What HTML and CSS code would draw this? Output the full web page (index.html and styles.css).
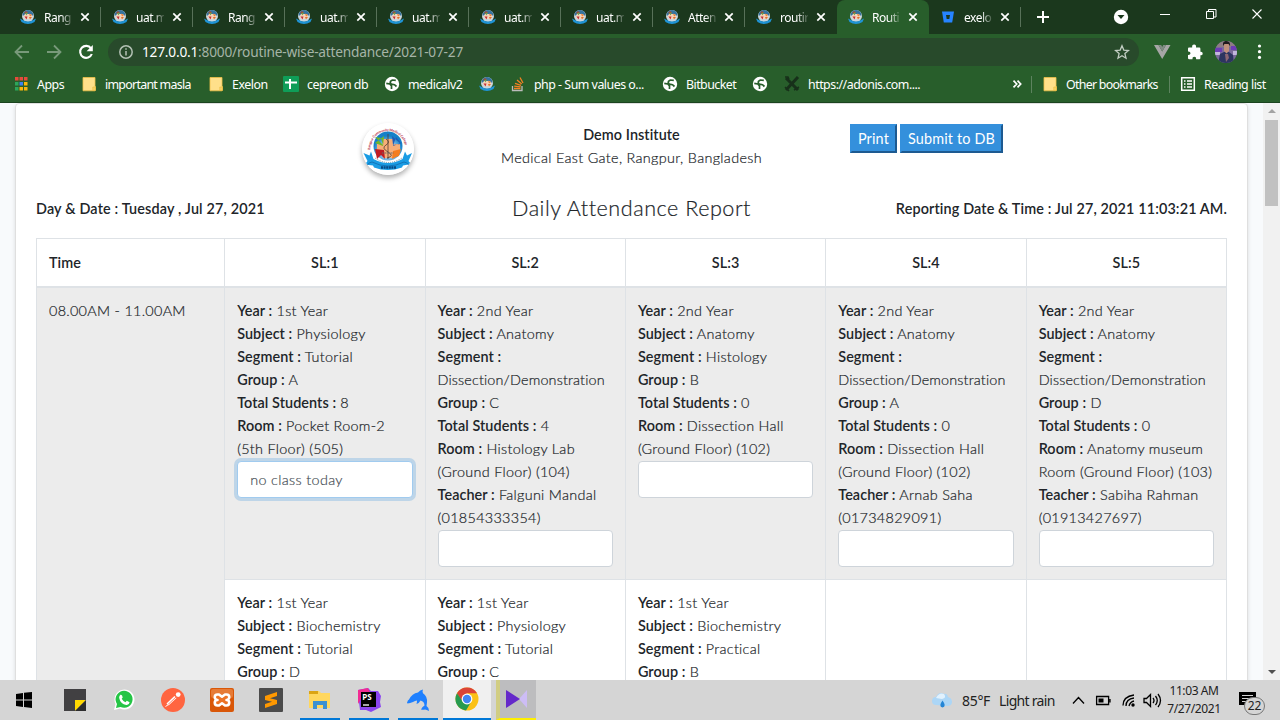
FILE: index.html
```html
<!DOCTYPE html>
<html lang="en">
<head>
<meta charset="utf-8">
<title>Routine</title>
<link rel="stylesheet" href="styles.css">
</head>
<body>
<svg class="defs" width="0" height="0">
  <symbol id="crest" viewBox="0 0 16 16">
    <circle cx="8" cy="7" r="6" fill="#c9d6df"/><path d="M2.500 6.500a5.500 5.500 0 0 1 11 0z" fill="#35739f"/><path d="M4 4l2-2 2 1.500L6 5z" fill="#a04a3a"/>
    <path d="M5 5h6l1.500 2.500L11 10H5.500L3.500 7.500z" fill="#f6d3b8"/><path d="M5 4l3-.5-1.500 3z" fill="#72a14c"/><path d="M9 4.500l3 1.500-2 1.500z" fill="#e8823a"/><path d="M4.500 7.500l3 0-1 3z" fill="#c2303a"/><path d="M9 8l3 0-2 2.500z" fill="#e0722f"/>
    <path d="M0 9.500l3 1.500q5 3 10 0l3-1.500-1.500 3.500q-6.500 4-13 0z" fill="#1f94d6"/>
  </symbol>
  <symbol id="close" viewBox="0 0 10 10"><path d="M1.300 1.300l7.400 7.400M8.700 1.300L1.300 8.700" stroke="#fff" stroke-width="1.700"/></symbol>
  <symbol id="folder" viewBox="0 0 16 16"><path d="M2 1.500h12v9h.500V14q0 .800-.800.800H2z" fill="#ffe08a" stroke="#f0c24a" stroke-width=".8"/><path d="M11.800 14.500v-3.500h2.500v3.500z" fill="#f7d468" stroke="#e8b93e" stroke-width=".6"/></symbol>
  <symbol id="globe" viewBox="0 0 16 16"><circle cx="8" cy="8" r="7.200" fill="#fff"/><path d="M2.300 7.300l3.500.700 1.700 1.800v3.200M12.500 10.500l-2-1.800-3-.5Q5.700 7 6.500 5.300L8.300 4l3.500.3" fill="none" stroke="#285e2b" stroke-width="1.700"/></symbol>
</svg>

<header class="browser">
  <div class="tabstrip">
    <div class="tab"><svg class="fav"><use href="#crest"/></svg><span>Rang</span><svg class="x"><use href="#close"/></svg></div>
    <div class="tab"><svg class="fav"><use href="#crest"/></svg><span>uat.m</span><svg class="x"><use href="#close"/></svg></div>
    <div class="tab"><svg class="fav"><use href="#crest"/></svg><span>Rang</span><svg class="x"><use href="#close"/></svg></div>
    <div class="tab"><svg class="fav"><use href="#crest"/></svg><span>uat.m</span><svg class="x"><use href="#close"/></svg></div>
    <div class="tab"><svg class="fav"><use href="#crest"/></svg><span>uat.m</span><svg class="x"><use href="#close"/></svg></div>
    <div class="tab"><svg class="fav"><use href="#crest"/></svg><span>uat.m</span><svg class="x"><use href="#close"/></svg></div>
    <div class="tab"><svg class="fav"><use href="#crest"/></svg><span>uat.m</span><svg class="x"><use href="#close"/></svg></div>
    <div class="tab"><svg class="fav"><use href="#crest"/></svg><span>Atten</span><svg class="x"><use href="#close"/></svg></div>
    <div class="tab before-active"><svg class="fav"><use href="#crest"/></svg><span>routir</span><svg class="x"><use href="#close"/></svg></div>
    <div class="tab active"><svg class="fav"><use href="#crest"/></svg><span>Routi</span><svg class="x"><use href="#close"/></svg></div>
    <div class="tab"><svg class="fav" viewBox="0 0 16 16"><path d="M2 2.500h12l-1.800 11H3.800z" fill="#2684ff"/><path d="M6 6h4l-.700 4H6.700z" fill="#1b381d"/></svg><span>exelo</span><svg class="x"><use href="#close"/></svg></div>
    <svg class="plus" viewBox="0 0 12 12"><path d="M6 0v12M0 6h12" stroke="#fff" stroke-width="2"/></svg>
    <svg class="winctl" width="160" height="34" viewBox="0 0 160 34"><circle cx="11" cy="17" r="7.200" fill="#fff"/><path d="M7.500 15h7l-3.500 4z" fill="#1b381d"/><path d="M50 14.500h10" stroke="#fff"/><path d="M96.500 11.500h7v7h-7zM98.500 11v-1.500h7.500v7.500h-2" fill="none" stroke="#fff"/><path d="M142.500 9.500l9 9M151.500 9.500l-9 9" stroke="#fff" stroke-width="1.100"/></svg>
  </div>

  <div class="toolbar">
    <svg class="nav" viewBox="0 0 108 36"><g fill="none" stroke-width="1.800"><path d="M29 18H16.500M22 11.500L15.500 18l6.500 6.500M47 18h12.500M54 11.500l6.500 6.500-6.500 6.500" stroke="#78997a"/><path d="M91 14.300A6 6 0 1 0 91.800 20" stroke="#fff" stroke-width="2.100"/></g><path d="M92.800 11v6.200h-6.200z" fill="#fff"/></svg>
    <div class="omnibox">
      <svg class="info" viewBox="0 0 16 16"><circle cx="8" cy="8" r="6.200" fill="none" stroke="#b4c1b5" stroke-width="1.500"/><path d="M8 7v4.500M8 4.300v1.500" stroke="#b4c1b5" stroke-width="1.500"/></svg>
      <span class="url"><b>127.0.0.1</b>:8000/routine-wise-attendance/2021-07-27</span>
      <svg class="star" viewBox="0 0 16 16"><path d="M8 1.800l1.800 4.300 4.700.4-3.600 3.100 1.100 4.600-4-2.500-4 2.500 1.100-4.600L1.500 6.500l4.700-.4z" fill="none" stroke="#c2cdc3" stroke-width="1.300"/></svg>
    </div>
    <svg class="ext" width="141" height="36" viewBox="0 0 141 36">
      <path d="M14 11h4.500l3.700 6.500 3.800-6.500h4.500L22.200 25z" fill="#a6a6a6"/><path d="M18.500 11h2.700l1 2 1-2H26l-3.800 6.500z" fill="#808b84"/>
      <path d="M49 13.500h3.200q-.5-3 1.900-3t1.900 3h3.200q1.200 0 1.200 1.200v3q2.300-.3 2.300 1.800t-2.300 1.800v2.700q0 1.200-1.200 1.200h-3q.2-2.400-1.900-2.400t-1.900 2.400H49.200q-1.200 0-1.200-1.200v-3q2.500.2 2.500-1.800t-2.500-1.800v-2.700q0-1.200 1-1.200z" fill="#fff"/>
      <clipPath id="av"><circle cx="86" cy="18" r="11"/></clipPath>
      <g clip-path="url(#av)"><path d="M75 7h22v22H75z" fill="#7a6a9a"/><path d="M75 7h22v6H75z" fill="#8d7c84"/><path d="M75 14h7v4h-7zM91 12h7v4h-7z" fill="#6d3bb5"/><path d="M75 18h5v3h-5zM93 17h4v4h-4z" fill="#c2b6dd"/><path d="M78 30l2-10 4-2h5l4 3 1 9z" fill="#2c3560"/><path d="M84 10h5v7l-2.500 2.500L84 17z" fill="#c0907c"/><path d="M83 12V9q1-2.500 4-2 3.500.5 3 5l-1.500-2h-4z" fill="#20191f"/><path d="M85 20h3l1 4-3 4z" fill="#8b6672"/></g>
      <g fill="#fff"><circle cx="119.500" cy="12" r="1.600"/><circle cx="119.500" cy="17.700" r="1.600"/><circle cx="119.500" cy="23.400" r="1.600"/></g>
    </svg>
  </div>

  <nav class="bookmarks">
    <a><svg viewBox="0 0 16 16"><path d="M2 1h3.500v3.500H2zM6.500 1H10v3.500H6.500zM11 1h3.500v3.500H11z" fill="#e64b3c"/><path d="M2 6h3.500v3.500H2zM2 11h3.500v3.500H2z" fill="#2da65a"/><path d="M6.500 6H10v3.500H6.500z" fill="#3b82f0"/><path d="M11 6h3.500v3.500H11zM6.500 11H10v3.500H6.500zM11 11h3.500v3.500H11z" fill="#f7b60d"/></svg><span>Apps</span></a>
    <a class="tight"><svg><use href="#folder"/></svg><span>important masla</span></a>
    <a><svg><use href="#folder"/></svg><span>Exelon</span></a>
    <a><svg viewBox="0 0 16 16"><rect width="16" height="16" rx="1" fill="#0f9d58"/><path d="M7 3v10M2 6.500h12" stroke="#fff" stroke-width="2"/></svg><span>cepreon db</span></a>
    <a><svg><use href="#globe"/></svg><span>medicalv2</span></a>
    <a><svg><use href="#crest"/></svg></a>
    <a><svg viewBox="0 0 16 16"><path d="M2.500 10v4.500h9.500V10" fill="none" stroke="#bcbcbb" stroke-width="1.300"/><path d="M4 12.500h6.500M4.200 10.200l6.400.7M5 7.300l6 2M7 4l4.700 4M10 1.500l3 5.500" stroke="#f48024" stroke-width="1.300"/></svg><span>php - Sum values o...</span></a>
    <a><svg><use href="#globe"/></svg><span class="wide">Bitbucket</span></a>
    <a><svg><use href="#globe"/></svg></a>
    <a><svg viewBox="0 0 16 16"><path d="M2 2l12 12M14 1L2 14" stroke="#17301a" stroke-width="3"/><path d="M1 1l3 0 1 2M1 11l4 4M10 14l5-3" stroke="#17301a" stroke-width="1.500" fill="none"/></svg><span>https://adonis.com....</span></a>
    <a class="more"><svg viewBox="0 0 16 16"><path d="M4.500 4.700L7.700 8l-3.200 3.300M8.500 4.700L11.700 8l-3.200 3.300" fill="none" stroke="#fff" stroke-width="1.700"/></svg></a>
    <a class="ruled tight"><svg><use href="#folder"/></svg><span>Other bookmarks</span></a>
    <a class="ruled"><svg viewBox="0 0 16 16"><path d="M1.700 1.700h12.600v12.600H1.700z" fill="none" stroke="#fff" stroke-width="1.500"/><path d="M4 5h1.500M7 5h5M4 8h1.500M7 8h5M4 11h1.500M7 11h5" stroke="#fff" stroke-width="1.600"/></svg><span>Reading list</span></a>
  </nav>
</header>

<div class="viewport">
  <main class="card">
    <div class="top">
      <div class="logo-col">
        <svg class="logo" viewBox="0 0 52 52"><circle cx="26" cy="26" r="26" fill="#fff"/>
          <defs><path id="arc" d="M8.200 27a17.800 19 0 0 1 35.600 0"/><radialGradient id="sky" cy=".65"><stop offset="0" stop-color="#fff"/><stop offset=".5" stop-color="#9bcbed"/><stop offset="1" stop-color="#1680c8"/></radialGradient></defs>
          <circle cx="26" cy="23" r="14.500" fill="url(#sky)"/>
          <text class="motto"><textPath href="#arc">Rangpur Community Medical College</textPath></text>
          <path d="M21 16h10v5h7v9h-7v5H21v-5h-6v-9h6z" fill="#f8ae78"/><path d="M13 20l9-7-1 10zM19 15l-6-1 8 8z" fill="#72b52a"/><path d="M39 21l-9-8 1 9zM34 14l5 6-8 3z" fill="#215bb5"/><path d="M13 26l9 1 1 9-4-4-4 4z" fill="#bf1d24"/><path d="M39 26l-8 2-1 8 4-2 3-1z" fill="#f47d20"/><path d="M26 11v25M24 16q5 3 0 6t2 7-1 6" stroke="#513d32" stroke-width=".8" fill="none"/>
          <path d="M20 30h12" stroke="#6c6663" stroke-width="1.200" stroke-dasharray="1 .5"/><path d="M13 35q13 9 27 0" fill="none" stroke="#78909e" stroke-dasharray="1 1"/>
          <path d="M1.500 30l6 2.500 1.500-4 2.500 7.500q14.500 8 29 0l2.500-7.500 2 4 5-2.500-3.500 8 2.500 3-8 1.500-1 2q-14.500 5-28 0l-1-2-8-1 2.500-3.500z" fill="#1a9ce4"/><path d="M5 42q3-3 5-3 16 8 32 0 2 0 5 3" fill="none" stroke="#126aab" stroke-width=".8"/>
          <path d="M19 44.500h15" stroke="#074984" stroke-width="2.500" stroke-dasharray="2 .6"/>
        </svg>
      </div>
      <div class="inst"><b>Demo Institute</b><br>Medical East Gate, Rangpur, Bangladesh</div>
      <div class="actions"><button class="print">Print</button><button class="submit">Submit to DB</button></div>
    </div>
    <div class="heading"><b class="day">Day &amp; Date : Tuesday , Jul 27, 2021</b><h1>Daily Attendance Report</h1><b class="rep">Reporting Date &amp; Time : Jul 27, 2021 11:03:21 AM.</b></div>
    <table>
      <colgroup><col class="c-time"><col><col><col><col><col></colgroup>
      <thead><tr><th class="time">Time</th><th>SL:1</th><th>SL:2</th><th>SL:3</th><th>SL:4</th><th>SL:5</th></tr></thead>
      <tbody>
        <tr class="shade">
          <td rowspan="2">08.00AM - 11.00AM</td>
          <td><b>Year :</b> 1st Year<br><b>Subject :</b> Physiology<br><b>Segment :</b> Tutorial<br><b>Group :</b> A<br><b>Total Students :</b> 8<br><b>Room :</b> Pocket Room-2<br>(5th Floor) (505)<input class="focused" value="no class today"></td>
          <td><b>Year :</b> 2nd Year<br><b>Subject :</b> Anatomy<br><b>Segment :</b><br><span class="long">Dissection/Demonstration</span><br><b>Group :</b> C<br><b>Total Students :</b> 4<br><b>Room :</b> Histology Lab<br>(Ground Floor) (104)<br><b>Teacher :</b> Falguni Mandal<br>(01854333354)<input></td>
          <td><b>Year :</b> 2nd Year<br><b>Subject :</b> Anatomy<br><b>Segment :</b> Histology<br><b>Group :</b> B<br><b>Total Students :</b> 0<br><b>Room :</b> Dissection Hall<br>(Ground Floor) (102)<input></td>
          <td><b>Year :</b> 2nd Year<br><b>Subject :</b> Anatomy<br><b>Segment :</b><br><span class="long">Dissection/Demonstration</span><br><b>Group :</b> A<br><b>Total Students :</b> 0<br><b>Room :</b> Dissection Hall<br>(Ground Floor) (102)<br><b>Teacher :</b> Arnab Saha<br>(01734829091)<input></td>
          <td><b>Year :</b> 2nd Year<br><b>Subject :</b> Anatomy<br><b>Segment :</b><br><span class="long">Dissection/Demonstration</span><br><b>Group :</b> D<br><b>Total Students :</b> 0<br><b>Room :</b> Anatomy museum<br>Room (Ground Floor) (103)<br><b>Teacher :</b> Sabiha Rahman<br>(01913427697)<input></td>
        </tr>
        <tr>
          <td><b>Year :</b> 1st Year<br><b>Subject :</b> Biochemistry<br><b>Segment :</b> Tutorial<br><b>Group :</b> D</td>
          <td><b>Year :</b> 1st Year<br><b>Subject :</b> Physiology<br><b>Segment :</b> Tutorial<br><b>Group :</b> C</td>
          <td><b>Year :</b> 1st Year<br><b>Subject :</b> Biochemistry<br><b>Segment :</b> Practical<br><b>Group :</b> B</td>
          <td></td><td></td>
        </tr>
      </tbody>
    </table>
  </main>
  <div class="scroll"><i class="up"></i><i class="thumb"></i><i class="down"></i></div>
</div>

<footer class="taskbar">
  <div class="cell start"><svg viewBox="0 0 24 24"><path d="M4 6l7-1v6.500H4zM12 4.800L20 4v7.500h-8zM4 12.500h7V19l-7-1zM12 12.500h8V20l-8-1z" fill="#000"/></svg></div>
  <div class="cell"><svg viewBox="0 0 24 24"><path d="M1 1h22v11L12 23H1z" fill="#414042"/><path d="M12 12h11L12 23z" fill="#ffd800"/><path d="M12 23l11-11v11z" fill="#2c2c2d"/></svg></div>
  <div class="cell"><svg viewBox="0 0 24 24"><path d="M2 22l1.500-6A10 10 0 1 1 8 20.500z" fill="#fff"/><path d="M4 20l1-4a8.500 8.500 0 1 1 3.500 3z" fill="#25c546"/><path d="M8.500 6.800q1.800-.5 2.200 2.700l-1 1.200q1.300 2.500 3.800 3.500l1.300-1.400 2.800 1.500q-.5 3-3.200 2.700-6-1-7.300-7.300 0-2 1.400-2.900z" fill="#fff"/></svg></div>
  <div class="cell"><svg viewBox="0 0 24 24"><circle cx="12" cy="12" r="12" fill="#ff6540"/><path d="M6.500 16.500L14.500 9" stroke="#fff" stroke-width="3"/><path d="M7 16.500L15 9" stroke="#ff6540" stroke-width=".8"/><circle cx="17.200" cy="6.600" r="2.400" fill="#fff"/><path d="M4.500 18.500l3-2" stroke="#fff"/></svg></div>
  <div class="cell"><svg viewBox="0 0 24 24"><rect width="24" height="24" rx="2" fill="#d95708"/><rect x="1" y="1" width="22" height="9" rx="2" fill="#e67b36"/><path d="M9 6.500h-1.500a2.700 2.700 0 0 0 0 5.500 2.700 2.700 0 0 0 0 5.500H9l3-2.200 3 2.200h1.500a2.700 2.700 0 0 0 0-5.500 2.700 2.700 0 0 0 0-5.500H15l-3 2.200z" fill="#ec7326" stroke="#fff" stroke-width="2.600" stroke-linejoin="round"/></svg></div>
  <div class="cell"><svg viewBox="0 0 24 24"><rect width="24" height="24" rx="1" fill="#4b4b4b"/><path d="M18 4v4l-7 2.200L18 12v4L6 20v-4l7-2.300L6 12V8z" fill="#ff9800"/></svg></div>
  <div class="cell run"><svg viewBox="0 0 24 24"><path d="M1 3h10l2 2h9v15H1z" fill="#ffd75e"/><path d="M1 3h9v3H1z" fill="#dba414"/><path d="M5 21v-8h14v8h-4v-4H9v4z" fill="#3c91d1"/></svg></div>
  <div class="cell run"><svg viewBox="0 0 24 24"><path d="M1 2l10-2 3 3 7 0 3 5-1 6 1 5-10 5-5-2-6 0-1-8z" fill="#8b45ef"/><path d="M1 2l10-2 2 4-9 7-3 5z" fill="#f22b93"/><path d="M4 4h15v15H4z" fill="#000"/><path d="M6 17h6" stroke="#fff" stroke-width="1.300"/><text x="5.300" y="11.500" class="ps">PS</text></svg></div>
  <div class="cell run"><svg viewBox="0 0 24 24"><path d="M3 11.500Q6 5.500 12 4.500q2-2.500 5-3-1 2 0 3.800 4.500 3 4 9.200l-.5 3.500q2.500 1.500 2.500 5-2.500-1.500-4-1.500-2 .5-4 0 1-2.500 3.500-4 0-4-4-5-1.500 3-4 3.500.5-2 .5-3.500-2 0-4 1.500-3 1.200-5.500 1.500-1-.5 0-2 0-1 1.500-2z" fill="#1f80ff"/></svg></div>
  <div class="cell chrome"><svg viewBox="0 0 24 24"><circle cx="12" cy="12" r="11.500" fill="#fbc116"/><path d="M2 6.200A11.500 11.500 0 0 1 22 6.200H12L7 15z" fill="#db4437"/><path d="M2 6.200a11.500 11.500 0 0 0 9 17.300l5-8.500-8 0z" fill="#279b50"/><circle cx="12" cy="12" r="5.400" fill="#fff"/><circle cx="12" cy="12" r="4.200" fill="#4285f4"/></svg></div>
  <div class="cell kmp"><svg viewBox="0 0 24 24"><path d="M23 3v18l-8-9z" fill="#cdbdf5"/><path d="M2 3l14 9-14 9z" fill="#6428ca"/></svg></div>
  <div class="weather"><svg viewBox="0 0 22 18"><path d="M5 14a4 4 0 0 1 0-8q3-6 8-3 3-1 4 3 4 1 4 5 0 4-5 4z" fill="#acd6f6"/><path d="M5 7q3-6 8-4 3 4-2 5z" fill="#e1f1fd"/><path d="M11.500 9.500q4.500 6 0 7-4.500-1 0-7z" fill="#2485d5"/></svg><span>85°F</span><span class="cond">Light rain</span></div>
  <svg class="tray" viewBox="0 0 92 40"><g fill="none" stroke="#000" stroke-width="1.300"><path d="M3 23.500l5.500-6 5.500 6M26.600 16.500h12v8h-12zM40 19v3.500"/><path d="M53 25.500q0-9 11-10.500M56 26q0-7 8-8M59 26q1-4 5-5M74 18.500h2.500l4-4v12l-4-4H74zM83 18q2 2.500 0 5M85.500 16q3.500 4.500 0 9M88 14q5 6.500 0 13"/></g><path d="M28.500 18.500h5v4h-5z"/><circle cx="63" cy="25" r="1.700"/></svg>
  <div class="clock">11:03 AM<br>7/27/2021</div>
  <div class="notice"><svg viewBox="0 0 18 16"><path d="M0 0h17v13H6l-4 0H0z"/><path d="M3 3.500h11M3 6.500h11M3 9.500h7" stroke="#d5d5d5"/></svg><span>22</span></div>
</footer>
</body>
</html>
```

FILE: styles.css
```css
* { box-sizing: border-box; }
body { margin: 0; width: 1280px; height: 720px; overflow: hidden; display: flex; flex-direction: column; font-family: Lato, sans-serif; }
.defs { position: absolute; }
svg { display: block; flex: none; }
.browser { height: 103px; flex: none; background: #285e2b; border-bottom: 1px solid #1b441f; font-family: "Noto Sans", sans-serif; color: #fff; }
.tabstrip { height: 34px; display: flex; align-items: center; background: #1b381d; padding-left: 9px; }
.tab { width: 92px; height: 34px; flex: none; display: flex; align-items: center; padding-left: 11px; background: linear-gradient(#587159, #587159) right center / 1px 20px no-repeat; }
.tab .fav { width: 16px; height: 16px; }
.tab span { width: 28px; margin: 0 8px; white-space: nowrap; font-size: 12px; letter-spacing: -.5px; -webkit-mask-image: linear-gradient(90deg, #000 60%, rgba(0,0,0,.15)); mask-image: linear-gradient(90deg, #000 60%, rgba(0,0,0,.15)); }
.tab .x { width: 10px; height: 10px; }
.tab.before-active { background: none; }
.tab.active { background: #285e2b; border-radius: 8px 8px 0 0; }
.plus { width: 12px; height: 12px; margin-left: 16px; }
.winctl { margin-left: auto; margin-right: 10px; }
.toolbar { height: 36px; display: flex; align-items: center; }
.nav { width: 108px; height: 36px; }
.omnibox { width: 1032px; height: 28px; border-radius: 14px; background: #284a2b; display: flex; align-items: center; padding: 0 9px 0 10px; }
.info { width: 16px; height: 16px; margin-right: 8px; }
.url { flex: 1; font-size: 13.7px; letter-spacing: -.21px; color: #a5b4a7; white-space: nowrap; padding-bottom: 1px; }
.url b { font-weight: 400; color: #fff; }
.star { width: 16px; height: 16px; }
.ext { position: relative; left: 1px; }
.bookmarks { height: 32px; padding: 0 0 4px 13px; display: grid; grid-template-columns: 68px 127px 75px 101px 95px 31px 152px 90px 32px 225px 22px 138px 111px; align-items: center; font-size: 12.4px; letter-spacing: -.5px; white-space: nowrap; }
.bookmarks a { display: flex; align-items: center; gap: 8px; }
.bookmarks svg { width: 16px; height: 16px; }
.bookmarks .tight { letter-spacing: -.72px; }
.bookmarks .wide { letter-spacing: -.55px; }
.bookmarks .ruled { border-left: 1px solid #5d835f; padding-left: 10px; }
.viewport { height: 577px; flex: none; display: flex; background: #f8fafc; overflow: hidden; }
.card { width: 1233px; height: 900px; margin-left: 15px; background: #fff; border: 1px solid #dfdfdf; border-radius: 4px; box-shadow: 0 2px 4px rgba(0,0,0,.12); padding: 20px; color: #212529; font-size: 14.4px; line-height: 23px; font-weight: 300; letter-spacing: .3px; -webkit-text-stroke: .2px #212529; }
.card b, .card th { font-weight: 600; letter-spacing: .07px; -webkit-text-stroke: 0; }
.top { display: grid; grid-template-columns: 397px 397px 397px; height: 71px; }
.logo-col { display: flex; justify-content: flex-end; padding-right: 18px; }
.logo { width: 52px; height: 52px; border-radius: 50%; box-shadow: 0 3px 5px rgba(0,0,0,.3); -webkit-text-stroke: 0; position: relative; left: -1px; top: -1px; }
.motto { font-size: 3.4px; font-weight: 700; letter-spacing: -.1px; fill: #b3263c; }
.inst { text-align: center; letter-spacing: .33px; }
.inst b { position: relative; }
.actions { padding-left: 20px; display: flex; gap: 3px; align-items: flex-start; }
.actions button { height: 29px; padding: 0; font: 400 14.4px/23px Lato, sans-serif; letter-spacing: .15px; color: #fff; background: #3490dc; border: 2px solid; border-color: #3490dc #1d5a91 #1d5a91 #3490dc; -webkit-text-stroke: 0; }
.print { width: 47px; }
.submit { width: 103px; }
.inst { margin-top: -1px; }
.heading { display: grid; grid-template-columns: 397px 397px 397px; height: 43px; align-items: start; padding-top: 2px; }
.heading b { white-space: nowrap; }
.heading .day { letter-spacing: .16px; }
.heading .rep { letter-spacing: .13px; }
.heading h1 { margin: 0; text-align: center; font-weight: 300; font-size: 21.6px; line-height: 23px; letter-spacing: .52px; }
.rep { text-align: right; }
table { width: 1191px; border-collapse: collapse; table-layout: fixed; }
.c-time { width: 188.2px; }
td, th { border: 1px solid #dee2e6; padding: 11px 12px 13px; vertical-align: top; text-align: left; }
th { text-align: center; border-bottom-width: 2px; padding: 12px; }
th.time { text-align: left; }
.shade td { background: #ececec; }
td { white-space: nowrap; }
.long { letter-spacing: .15px; }
input { display: block; width: 100%; height: 37px; margin: 1px 0 -1px; border: 1px solid #ced4da; border-radius: 4px; padding: 6px 12px; font: 300 14.4px/23px Lato, sans-serif; letter-spacing: .35px; color: #495057; -webkit-text-stroke: .2px #495057; }
input.focused { border-color: #a1cbef; box-shadow: 0 0 0 3px rgba(52,144,220,.25); }
.scroll { width: 17px; height: 577px; margin-left: auto; background: #f1f1f1; display: flex; flex-direction: column; align-items: center; }
.up, .down { width: 0; height: 0; border: 4px solid transparent; }
.up { margin-top: 2px; border-bottom-color: #a3a3a3; margin-bottom: 7px; }
.thumb { width: 13px; height: 86px; background: #c1c1c1; }
.down { margin-top: auto; margin-bottom: 2px; border-top-color: #505050; }
.taskbar { height: 40px; background: #d5d5d5; display: flex; font-family: "Noto Sans", sans-serif; color: #222; }
.cell { width: 49px; height: 40px; flex: none; display: flex; align-items: center; justify-content: center; }
.cell svg { width: 24px; height: 24px; }
.start { width: 50px; padding-right: 2px; }
.run { background: linear-gradient(#0078d7, #0078d7) center bottom / 40px 2px no-repeat; }
.ps { font: 700 8px "Noto Sans", sans-serif; fill: #fff; }
.chrome { width: 48px; background: #f0f0f0; border-bottom: 2px solid #0078d7; margin-left: 1px; }
.kmp { width: 40px; margin-left: 5px; background: #bdbdbf; border-left: 4px solid #d1cd83; border-bottom: 2px solid #fff000; }
.kmp svg { margin-right: 4px; }
.weather { margin-left: 395px; width: 125px; display: flex; align-items: center; font-size: 14px; letter-spacing: -.3px; white-space: nowrap; }
.weather svg { width: 22px; height: 18px; }
.weather span { margin-left: 9px; }
.weather .cond { letter-spacing: -.7px; }
.tray { width: 92px; height: 40px; margin-left: 14px; }
.clock { width: 70px; text-align: center; font-size: 12px; line-height: 18px; padding-top: 2px; letter-spacing: -.4px; margin-left: -3px; }
.notice { position: relative; width: 35px; margin-left: 8px; padding-top: 12px; }
.notice svg { width: 18px; height: 16px; margin-left: 2px; }
.notice span { position: absolute; left: 7px; top: 17px; width: 21px; height: 18px; border: 1px solid #777; border-radius: 9px; background: #d5d5d5; font-size: 12px; line-height: 16px; text-align: center; }
```
